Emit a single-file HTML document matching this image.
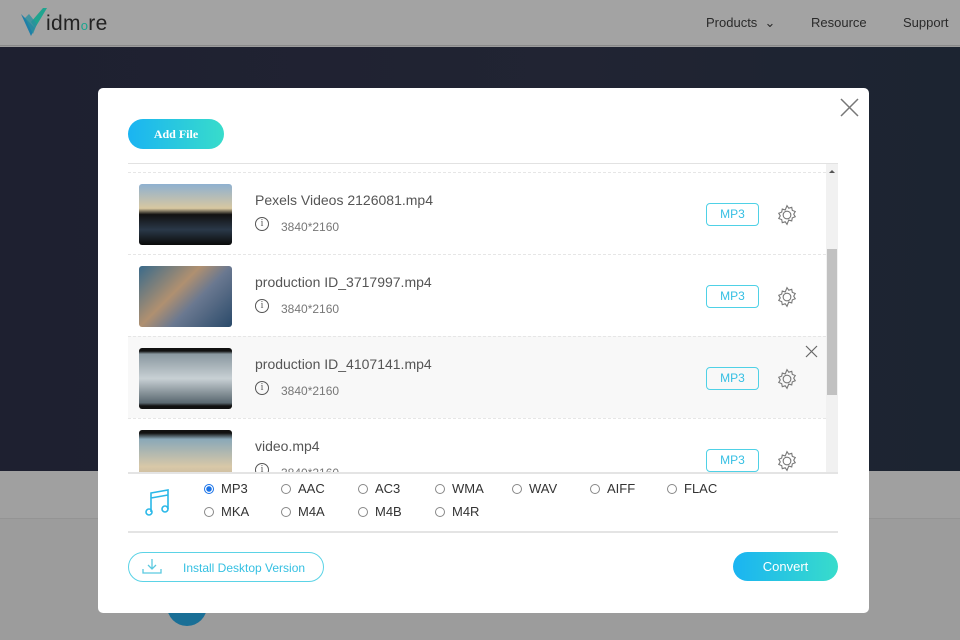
<!DOCTYPE html>
<html><head><meta charset="utf-8"><style>
*{margin:0;padding:0;box-sizing:border-box}
body{width:960px;height:640px;overflow:hidden;position:relative;font-family:"Liberation Sans",Arial,sans-serif;background:#9c9c9c}
.nav{position:absolute;left:0;top:0;width:960px;height:46px;background:#a3a3a3;border-bottom:1px solid #8a8a8a}
.nav span{position:absolute;top:15px;font-size:13px;color:#2a2a2a}
.hero{position:absolute;left:0;top:47px;width:960px;height:424px;background:linear-gradient(90deg,#1e2030 0%,#212433 60%,#1c2431 100%)}
.band{position:absolute;left:0;top:471px;width:960px;height:48px;background:#a0a0a0;border-bottom:1px solid #949494}
.modal{position:absolute;left:98px;top:88px;width:771px;height:525px;background:#fff;border-radius:5px}
.add{position:absolute;left:30px;top:31px;width:96px;height:30px;border-radius:15px;background:linear-gradient(90deg,#1ab4f2,#38dccb);color:#fff;font-family:"Liberation Serif",serif;font-weight:bold;font-size:12px;text-align:center;line-height:30px}
.list{position:absolute;left:30px;top:75px;width:710px;height:309px;border-top:1px solid #e2e2e2;overflow:hidden}
.row{position:absolute;left:0;width:698px;height:82px;border-top:1px dashed #e6e6e6}
.thumb{position:absolute;left:11px;top:11px;width:93px;height:61px;border-radius:3px;background:#111}
.title{position:absolute;left:127px;top:19px;font-size:14px;color:#555}
.info{position:absolute;left:127px;top:44px;width:14px;height:14px;border:1px solid #555;border-radius:50%;font-size:10px;text-align:center;line-height:12px;color:#555;font-family:"Liberation Serif",serif}
.dim{position:absolute;left:153px;top:47px;font-size:12px;color:#777}
.mp3{position:absolute;left:578px;top:30px;width:53px;height:23px;border:1px solid #4fd1e6;border-radius:4px;color:#35bfe3;font-size:12px;text-align:center;line-height:21px}
.gear{position:absolute;left:648px;top:31px}
.sb{position:absolute;left:698px;top:0;width:12px;height:309px;background:#f1f1f1}
.sbt{position:absolute;left:1px;top:85px;width:10px;height:146px;background:#c1c1c1}
.fmt{position:absolute;left:30px;top:384px;width:710px;height:61px;border-top:2px solid #e4e4e4;border-bottom:2px solid #e4e4e4}
.r{position:absolute;font-size:13px;color:#333}
.r i{display:inline-block;width:10px;height:10px;border:1px solid #888;border-radius:50%;margin-right:7px;vertical-align:-1px}
.r i.on{border-color:#1a73e8;background:radial-gradient(circle,#1a73e8 2.5px,#fff 3px)}
.inst{position:absolute;left:30px;top:464px;width:196px;height:30px;border:1px solid #5bd3e6;border-radius:15px;color:#35c0e2;font-size:12px}
.conv{position:absolute;left:635px;top:464px;width:105px;height:29px;border-radius:15px;background:linear-gradient(90deg,#1ab4f2,#38dccb);color:#fff;font-size:13px;text-align:center;line-height:29px}
</style></head><body>
<div class="nav">
<svg style="position:absolute;left:21px;top:8px" width="26" height="28" viewBox="0 0 26 28"><path d="M0 6 L10 28 L14 20 Z" fill="#1e7fa8"/><path d="M14 20 L26 0 L22 0 L10 14 Z" fill="#1fa48f"/><path d="M4 10 L12 26 L16 16 L8 6Z" fill="#2b8f9e" opacity=".8"/></svg>
<span style="left:46px;top:12px;font-size:21px;color:#222;letter-spacing:.3px">idm<span style="position:static;color:#1aa48f">o</span>re</span>
<span style="left:706px">Products &nbsp;⌄</span><span style="left:811px">Resource</span><span style="left:903px">Support</span>
</div>
<div class="hero"></div>
<div class="band"></div>
<div style="position:absolute;left:167px;top:600px;width:40px;height:26px;border-radius:0 0 20px 20px;background:#1a6f96"></div>
<div class="modal">
<svg style="position:absolute;left:742px;top:10px" width="19" height="19"><path d="M1 1L18 18M18 1L1 18" stroke="#777" stroke-width="1.5"/></svg>
<div class="add">Add File</div>
<div class="list">
<div class="row" style="top:8px"><div class="thumb" style="background:linear-gradient(180deg,#8fb0d0 0%,#d8c8a0 40%,#111 50%,#2a3848 75%,#0a0a0a 100%)"></div><div class="title">Pexels Videos 2126081.mp4</div><div class="info">i</div><div class="dim">3840*2160</div><div class="mp3">MP3</div><svg class="gear" width="22" height="22" viewBox="0 0 20 20"><circle cx="10" cy="10" r="3.5" fill="none" stroke="#777"/><path d="M10 1.5l1.6 2.3 2.7-.8.5 2.8 2.7 1-1.4 2.4 1.4 2.4-2.7 1-.5 2.8-2.7-.8L10 18.5l-1.6-2.3-2.7.8-.5-2.8-2.7-1L3.9 10.8 2.5 8.4l2.7-1 .5-2.8 2.7.8z" fill="none" stroke="#777"/></svg></div>
<div class="row" style="top:90px"><div class="thumb" style="background:linear-gradient(135deg,#3a6a8a,#b09070 40%,#6a7890 60%,#2a4a6a)"></div><div class="title">production ID_3717997.mp4</div><div class="info">i</div><div class="dim">3840*2160</div><div class="mp3">MP3</div><svg class="gear" width="22" height="22" viewBox="0 0 20 20"><circle cx="10" cy="10" r="3.5" fill="none" stroke="#777"/><path d="M10 1.5l1.6 2.3 2.7-.8.5 2.8 2.7 1-1.4 2.4 1.4 2.4-2.7 1-.5 2.8-2.7-.8L10 18.5l-1.6-2.3-2.7.8-.5-2.8-2.7-1L3.9 10.8 2.5 8.4l2.7-1 .5-2.8 2.7.8z" fill="none" stroke="#777"/></svg></div>
<div class="row" style="top:172px;background:#f8f8f8"><div class="thumb" style="background:linear-gradient(180deg,#111 5%,#8a98a0 10%,#c8d0d4 50%,#5a6870 90%,#111 95%)"></div><div class="title">production ID_4107141.mp4</div><div class="info">i</div><div class="dim">3840*2160</div><div class="mp3">MP3</div><svg class="gear" width="22" height="22" viewBox="0 0 20 20"><circle cx="10" cy="10" r="3.5" fill="none" stroke="#777"/><path d="M10 1.5l1.6 2.3 2.7-.8.5 2.8 2.7 1-1.4 2.4 1.4 2.4-2.7 1-.5 2.8-2.7-.8L10 18.5l-1.6-2.3-2.7.8-.5-2.8-2.7-1L3.9 10.8 2.5 8.4l2.7-1 .5-2.8 2.7.8z" fill="none" stroke="#777"/></svg><svg style="position:absolute;left:677px;top:8px" width="13" height="13"><path d="M1 1L12 12M12 1L1 12" stroke="#666" stroke-width="1.2"/></svg></div>
<div class="row" style="top:254px"><div class="thumb" style="background:linear-gradient(180deg,#111 5%,#8aa8b8 15%,#d8c8a8 60%,#b8a890)"></div><div class="title">video.mp4</div><div class="info">i</div><div class="dim">3840*2160</div><div class="mp3">MP3</div><svg class="gear" width="22" height="22" viewBox="0 0 20 20"><circle cx="10" cy="10" r="3.5" fill="none" stroke="#777"/><path d="M10 1.5l1.6 2.3 2.7-.8.5 2.8 2.7 1-1.4 2.4 1.4 2.4-2.7 1-.5 2.8-2.7-.8L10 18.5l-1.6-2.3-2.7.8-.5-2.8-2.7-1L3.9 10.8 2.5 8.4l2.7-1 .5-2.8 2.7.8z" fill="none" stroke="#777"/></svg></div>
<div class="sb"><div style="position:absolute;left:3px;top:6px;border:3px solid transparent;border-bottom:3px solid #555;border-top:0"></div><div class="sbt"></div></div>
</div>
<div class="fmt">
<svg style="position:absolute;left:17px;top:13px" width="26" height="30" viewBox="0 0 26 30"><path d="M6 25V6L23 3V22M6 11L23 8" fill="none" stroke="#2ab8e8" stroke-width="1.6"/><circle cx="4" cy="25" r="3" fill="none" stroke="#2ab8e8" stroke-width="1.6"/><circle cx="20" cy="22" r="3" fill="none" stroke="#2ab8e8" stroke-width="1.6"/></svg>
<div class="r" style="left:76px;top:7px"><i class="on"></i>MP3</div>
<div class="r" style="left:153px;top:7px"><i></i>AAC</div>
<div class="r" style="left:230px;top:7px"><i></i>AC3</div>
<div class="r" style="left:307px;top:7px"><i></i>WMA</div>
<div class="r" style="left:384px;top:7px"><i></i>WAV</div>
<div class="r" style="left:462px;top:7px"><i></i>AIFF</div>
<div class="r" style="left:539px;top:7px"><i></i>FLAC</div>
<div class="r" style="left:76px;top:30px"><i></i>MKA</div>
<div class="r" style="left:153px;top:30px"><i></i>M4A</div>
<div class="r" style="left:230px;top:30px"><i></i>M4B</div>
<div class="r" style="left:307px;top:30px"><i></i>M4R</div>
</div>
<div class="inst"><svg style="position:absolute;left:13px;top:5px" width="20" height="17" viewBox="0 0 20 17"><path d="M10 1V11M6 7L10 11L14 7M1 11V15H19V11" fill="none" stroke="#5bc9e0" stroke-width="1.3"/></svg><span style="position:absolute;left:54px;top:8px">Install Desktop Version</span></div>
<div class="conv">Convert</div>
</div>
</body></html>
